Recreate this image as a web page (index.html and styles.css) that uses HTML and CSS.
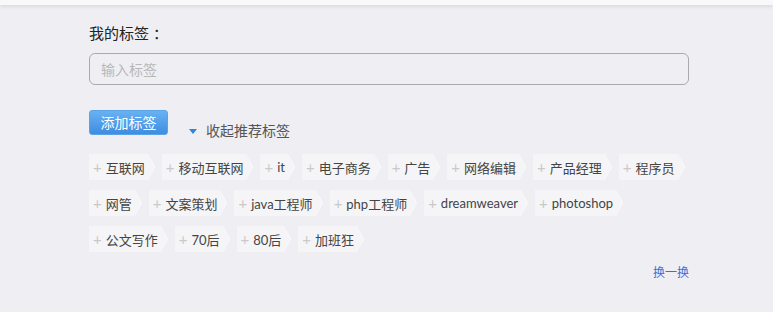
FILE: index.html
```html
<!DOCTYPE html>
<html lang="zh-CN">

<head>
  <meta charset="UTF-8">
  <meta name="viewport" content="width=device-width, initial-scale=1.0">
  <title>我的标签</title>
  <link rel="stylesheet" href="styles.css">
</head>

<body>

  <div class="topbar"></div>

  <div class="container">
    <div class="title">我的标签<span class="colon">：</span></div>
    <input type="text" class="tag-input" placeholder="输入标签">

    <div class="actions">
      <button class="btn-add">添加标签</button>
      <div class="toggle"><span class="caret"></span>收起推荐标签</div>
    </div>

    <div class="tags">
      <span class="tag"><span class="plus">+</span>互联网</span>
      <span class="tag"><span class="plus">+</span>移动互联网</span>
      <span class="tag"><span class="plus">+</span>it</span>
      <span class="tag"><span class="plus">+</span>电子商务</span>
      <span class="tag"><span class="plus">+</span>广告</span>
      <span class="tag"><span class="plus">+</span>网络编辑</span>
      <span class="tag"><span class="plus">+</span>产品经理</span>
      <span class="tag"><span class="plus">+</span>程序员</span>
      <span class="tag"><span class="plus">+</span>网管</span>
      <span class="tag"><span class="plus">+</span>文案策划</span>
      <span class="tag"><span class="plus">+</span>java工程师</span>
      <span class="tag"><span class="plus">+</span>php工程师</span>
      <span class="tag"><span class="plus">+</span>dreamweaver</span>
      <span class="tag"><span class="plus">+</span>photoshop</span>
      <span class="tag"><span class="plus">+</span>公文写作</span>
      <span class="tag"><span class="plus">+</span>70后</span>
      <span class="tag"><span class="plus">+</span>80后</span>
      <span class="tag"><span class="plus">+</span>加班狂</span>
    </div>

    <div class="more"><a href="#">换一换</a></div>
  </div>

</body>

</html>
```

FILE: styles.css
```css
body,
html {
  margin: 0;
  height: 100%;
  font-family: Lato, "Noto Sans CJK SC", sans-serif;
  background-color: #efeef3;
  color: #333;
}

.topbar {
  height: 5px;
  background-color: #f8f8f8;
  box-shadow: 0 1px 4px rgba(0, 0, 0, 0.12);
}

.container {
  width: 600px;
  margin-left: 89px;
}

.title {
  margin-top: 18px;
  font-size: 15px;
  line-height: 20px;
  color: #222;
}

.colon {
  margin-left: 4px;
}

.tag-input {
  display: block;
  box-sizing: border-box;
  width: 600px;
  height: 32px;
  margin-top: 10px;
  padding: 0 11px;
  border: 1px solid #aaa;
  border-radius: 6px;
  background-color: #efeef3;
  font-family: inherit;
  font-size: 14px;
  outline: none;
}

.tag-input::placeholder {
  color: #b8b8b8;
}

.actions {
  display: flex;
  margin-top: 25px;
}

.btn-add {
  width: 79px;
  height: 25px;
  padding: 0;
  border: 1px solid #5ba3e8;
  border-radius: 3px;
  background: linear-gradient(#68b2f3, #3e8de0);
  color: #fff;
  font-family: inherit;
  font-size: 14px;
  line-height: 22px;
  cursor: pointer;
}

.toggle {
  display: flex;
  align-items: center;
  margin-left: 21px;
  margin-top: 12px;
  font-size: 14px;
  line-height: 18px;
  color: #555;
}

.caret {
  width: 0;
  height: 0;
  margin-right: 9px;
  border-left: 4px solid transparent;
  border-right: 4px solid transparent;
  border-top: 5px solid #2f86d8;
}

.tags {
  display: flex;
  flex-wrap: wrap;
  gap: 10px 14px;
  margin-top: 14px;
}

.tag {
  position: relative;
  display: inline-flex;
  align-items: center;
  height: 26px;
  padding: 0 3px 0 4px;
  background-color: #f5f5f7;
  font-size: 13px;
  color: #444;
  cursor: pointer;
}

.tag::before,
.tag::after {
  content: "";
  position: absolute;
  top: 0;
  width: 0;
  height: 0;
  border-top: 13px solid transparent;
  border-bottom: 13px solid transparent;
}

.tag::before {
  right: -7px;
  border-left: 7px solid #fbfbfc;
}

.tag::after {
  right: -6px;
  border-left: 6px solid #f5f5f7;
}

.plus {
  margin-right: 4px;
  font-size: 15px;
  color: #c9c9c9;
}

.more {
  text-align: right;
  margin-top: 11px;
  font-size: 12px;
}

.more a {
  color: #3b6fd8;
  text-decoration: none;
}
```
